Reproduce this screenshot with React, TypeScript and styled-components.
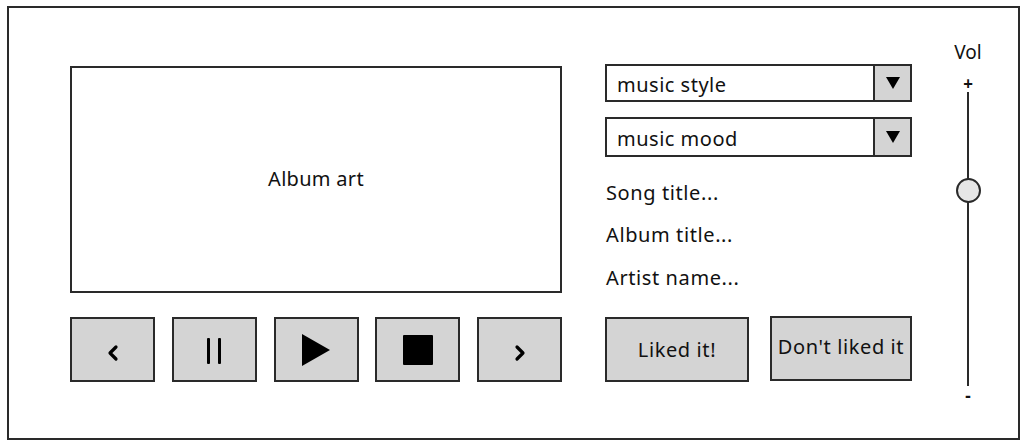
import React from "react";
import styled, { createGlobalStyle } from "styled-components";

const Global = createGlobalStyle`
  html, body { margin: 0; padding: 0; background: #ffffff; }
  body { font-family: "Comic Sans MS", "Noto Sans", "DejaVu Sans", sans-serif; color: #111; }
  * { box-sizing: border-box; }
`;

const Frame = styled.div`
  margin: 6px 0 0 7px;
  width: 1013px;
  height: 434px;
  border: 2px solid #2a2a2a;
  display: flex;
  align-items: flex-start;
`;

const LeftCol = styled.div`
  margin: 58px 0 0 61px;
  width: 492px;
  display: flex;
  flex-direction: column;
  gap: 24px;
`;

const AlbumArt = styled.div`
  height: 227px;
  border: 2px solid #2a2a2a;
  display: flex;
  align-items: center;
  justify-content: center;
  font-size: 20px;
  letter-spacing: 0.3px;
  padding-bottom: 3px;
`;

const Controls = styled.div`
  display: flex;
  justify-content: space-between;
`;

const CtrlButton = styled.div`
  width: 85px;
  height: 65px;
  background: #d4d4d4;
  border: 2px solid #2a2a2a;
  display: flex;
  align-items: center;
  justify-content: center;
`;

const RightCol = styled.div`
  margin: 56px 0 0 43px;
  width: 307px;
  display: flex;
  flex-direction: column;
`;

const Select = styled.div<{ $h: number; $mt: number }>`
  height: ${(p) => p.$h}px;
  margin-top: ${(p) => p.$mt}px;
  border: 2px solid #2a2a2a;
  display: flex;
  align-items: stretch;
`;

const SelectLabel = styled.div`
  flex: 1;
  display: flex;
  align-items: center;
  padding: 3px 0 0 10px;
  font-size: 20px;
  letter-spacing: 0.5px;
`;

const SelectArrow = styled.div`
  width: 37px;
  background: #d4d4d4;
  border-left: 2px solid #2a2a2a;
  display: flex;
  align-items: center;
  justify-content: center;
`;

const InfoText = styled.div<{ $mt: number }>`
  margin-top: ${(p) => p.$mt}px;
  padding-left: 1px;
  font-size: 20px;
  letter-spacing: 0.6px;
  line-height: 24px;
`;

const LikeRow = styled.div`
  margin-top: 27px;
  display: flex;
  justify-content: space-between;
`;

const LikeButton = styled.div<{ $w: number; $up?: boolean }>`
  width: ${(p) => p.$w}px;
  height: 65px;
  margin-top: ${(p) => (p.$up ? -1 : 0)}px;
  background: #d4d4d4;
  border: 2px solid #2a2a2a;
  display: flex;
  align-items: center;
  justify-content: center;
  font-size: 20px;
  letter-spacing: 0.6px;
  white-space: nowrap;
  padding-bottom: ${(p) => (p.$up ? 4 : 0)}px;
`;

const VolCol = styled.div`
  margin: 32px 0 0 26px;
  width: 60px;
  display: flex;
  flex-direction: column;
  align-items: center;
`;

const VolLabel = styled.div`
  font-size: 19px;
  line-height: 24px;
`;

const Sign = styled.div<{ $mt?: number }>`
  margin-top: ${(p) => p.$mt ?? 0}px;
  font-size: 17px;
  font-weight: bold;
  line-height: 12px;
`;

const Track = styled.div`
  position: relative;
  width: 2px;
  height: 294px;
  margin: 2px 0 4px;
  background: #2a2a2a;
`;

const Knob = styled.div`
  position: absolute;
  left: 50%;
  top: 86px;
  width: 25px;
  height: 25px;
  margin-left: -12.5px;
  border-radius: 50%;
  background: #e6e6e6;
  border: 2px solid #2a2a2a;
`;

const Icon = ({ kind }: { kind: string }) => {
  switch (kind) {
    case "prev":
      return (
        <svg width="14" height="18" viewBox="0 0 14 18" style={{ marginTop: 6 }}>
          <path d="M10 3 L4 9 L10 15" fill="none" stroke="#000" strokeWidth="3.2" strokeLinecap="round" strokeLinejoin="round" />
        </svg>
      );
    case "next":
      return (
        <svg width="14" height="18" viewBox="0 0 14 18" style={{ marginTop: 6 }}>
          <path d="M4 3 L10 9 L4 15" fill="none" stroke="#000" strokeWidth="3.2" strokeLinecap="round" strokeLinejoin="round" />
        </svg>
      );
    case "pause":
      return (
        <svg width="20" height="28" viewBox="0 0 20 28" style={{ marginTop: 2 }}>
          <rect x="3" y="1" width="3" height="26" rx="1" fill="#000" />
          <rect x="14" y="1" width="3" height="26" rx="1" fill="#000" />
        </svg>
      );
    case "play":
      return (
        <svg width="30" height="32" viewBox="0 0 30 32">
          <path d="M1 0 L29 16 L1 32 Z" fill="#000" />
        </svg>
      );
    default:
      return (
        <svg width="30" height="30" viewBox="0 0 30 30">
          <rect x="0" y="0" width="30" height="30" rx="1" fill="#000" />
        </svg>
      );
  }
};

const Arrow = () => (
  <svg width="14" height="12" viewBox="0 0 14 12">
    <path d="M0 0 L14 0 L7 12 Z" fill="#000" />
  </svg>
);

export default function App() {
  return (
    <>
      <Global />
      <Frame>
        <LeftCol>
          <AlbumArt>Album art</AlbumArt>
          <Controls>
            {["prev", "pause", "play", "stop", "next"].map((k) => (
              <CtrlButton key={k}>
                <Icon kind={k} />
              </CtrlButton>
            ))}
          </Controls>
        </LeftCol>
        <RightCol>
          <Select $h={38} $mt={0}>
            <SelectLabel>music style</SelectLabel>
            <SelectArrow>
              <Arrow />
            </SelectArrow>
          </Select>
          <Select $h={40} $mt={15}>
            <SelectLabel>music mood</SelectLabel>
            <SelectArrow>
              <Arrow />
            </SelectArrow>
          </Select>
          <InfoText $mt={24}>Song title...</InfoText>
          <InfoText $mt={18}>Album title...</InfoText>
          <InfoText $mt={19}>Artist name...</InfoText>
          <LikeRow>
            <LikeButton $w={144}>Liked it!</LikeButton>
            <LikeButton $w={142} $up>
              Don't liked it
            </LikeButton>
          </LikeRow>
        </RightCol>
        <VolCol>
          <VolLabel>Vol</VolLabel>
          <Sign $mt={14}>+</Sign>
          <Track>
            <Knob />
          </Track>
          <Sign>-</Sign>
        </VolCol>
      </Frame>
    </>
  );
}
